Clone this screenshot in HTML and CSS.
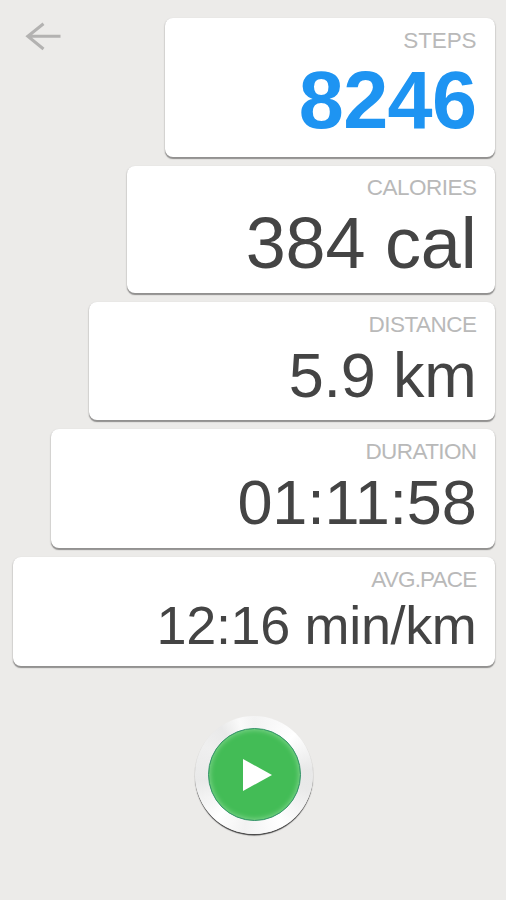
FILE: index.html
```html
<!DOCTYPE html>
<html lang="en">
<head>
    <meta charset="UTF-8">
    <meta name="viewport" content="width=device-width, initial-scale=1.0">
    <title>Pedometer</title>
    <link rel="stylesheet" href="styles.css">
</head>
<body>
    <div class="screen">
        <button class="back-button" aria-label="Back">
            <svg width="38" height="30" viewBox="0 0 38 30">
                <path d="M19.5 1.8 L3.8 14.2 L19.5 27 M3.5 14.2 H36.5" />
            </svg>
        </button>

        <main class="stats">
            <div class="card steps">
                <div class="label">STEPS</div>
                <div class="value">8246</div>
            </div>
            <div class="card calories">
                <div class="label">CALORIES</div>
                <div class="value">384 cal</div>
            </div>
            <div class="card distance">
                <div class="label">DISTANCE</div>
                <div class="value">5.9 km</div>
            </div>
            <div class="card duration">
                <div class="label">DURATION</div>
                <div class="value">01:11:58</div>
            </div>
            <div class="card pace">
                <div class="label">AVG.PACE</div>
                <div class="value">12:16 min/km</div>
            </div>
        </main>

        <div class="controls">
            <button class="play-button" aria-label="Start">
                <span class="play-face">
                    <svg width="29" height="32" viewBox="0 0 29 32">
                        <path d="M0 0 L29 16 L0 32 Z" />
                    </svg>
                </span>
            </button>
        </div>
    </div>
</body>
</html>
```
FILE: styles.css
```css
* {
    margin: 0;
    padding: 0;
    box-sizing: border-box;
    font-family: 'Liberation Sans', Arial, sans-serif;
}

body {
    background-color: #ecebe9;
    color: #444;
}

.screen {
    position: relative;
    height: 900px;
    padding: 18px 11px 0 13px;
    overflow: hidden;
}

button {
    border: none;
    background: none;
    cursor: pointer;
}

/* Back arrow sits beside the first card */
.back-button {
    position: absolute;
    top: 22px;
    left: 24px;
    width: 38px;
    height: 30px;
}

.back-button svg {
    display: block;
    fill: none;
    stroke: #b3b2b1;
    stroke-width: 3;
}

/* Stair of cards, each one wider than the last */
.stats {
    display: flex;
    flex-direction: column;
    align-items: flex-end;
    gap: 9px;
}

.card {
    padding: 11px 18.5px 0 0;
    background: #fff;
    border-radius: 8px;
    box-shadow: 0 1.5px 1px #929190, 0 1px 2px rgba(0, 0, 0, 0.25);
    text-align: right;
    white-space: nowrap;
}

.label {
    font-size: 22.5px;
    line-height: 24px;
    letter-spacing: -0.5px;
    color: #b9b9b9;
}

.value {
    letter-spacing: -0.2px;
}

.steps {
    width: 330px;
    height: 138.5px;
}

.steps .label {
    letter-spacing: -0.1px;
}

.steps .value {
    font-size: 81px;
    font-weight: bold;
    line-height: 95px;
    letter-spacing: -0.6px;
    color: #1e94f2;
}

.calories {
    width: 368px;
    height: 127px;
    padding-top: 10px;
}

.calories .value {
    font-size: 72px;
    line-height: 87px;
}

.distance {
    width: 406px;
    height: 118.5px;
}

.distance .value {
    font-size: 63px;
    line-height: 76px;
}

.duration {
    width: 444px;
    height: 118.5px;
}

.duration .label {
    letter-spacing: -0.6px;
}

.duration .value {
    font-size: 63px;
    line-height: 77px;
}

.pace {
    width: 482px;
    height: 109px;
}

.pace .label {
    letter-spacing: -0.8px;
}

.pace .value {
    font-size: 54px;
    line-height: 67px;
    letter-spacing: -0.35px;
}

.controls {
    display: flex;
    justify-content: center;
    margin-top: 50px;
}

/* Metal ring */
.play-button {
    display: flex;
    align-items: center;
    justify-content: center;
    width: 118px;
    height: 118px;
    border-radius: 50%;
    background: conic-gradient(#f3f3f3, #fff 45deg, #e8e8e8 85deg, #e9e9e9 105deg, #fff 150deg, #f2f2f2 190deg, #fff 220deg, #e9e9e9 265deg, #efefef 300deg, #e9e9e9 325deg, #fafafa 345deg, #f3f3f3);
    box-shadow: 0 1.5px 1px #444;
}

.play-face {
    display: flex;
    align-items: center;
    justify-content: center;
    width: 93px;
    height: 93px;
    padding-left: 7px;
    border: 1.5px solid #36936b;
    border-radius: 50%;
    background: #43bc56;
    box-shadow: inset 0 0 5px 1px #7fd48b;
}

.play-face svg {
    display: block;
    fill: #fff;
}
```
